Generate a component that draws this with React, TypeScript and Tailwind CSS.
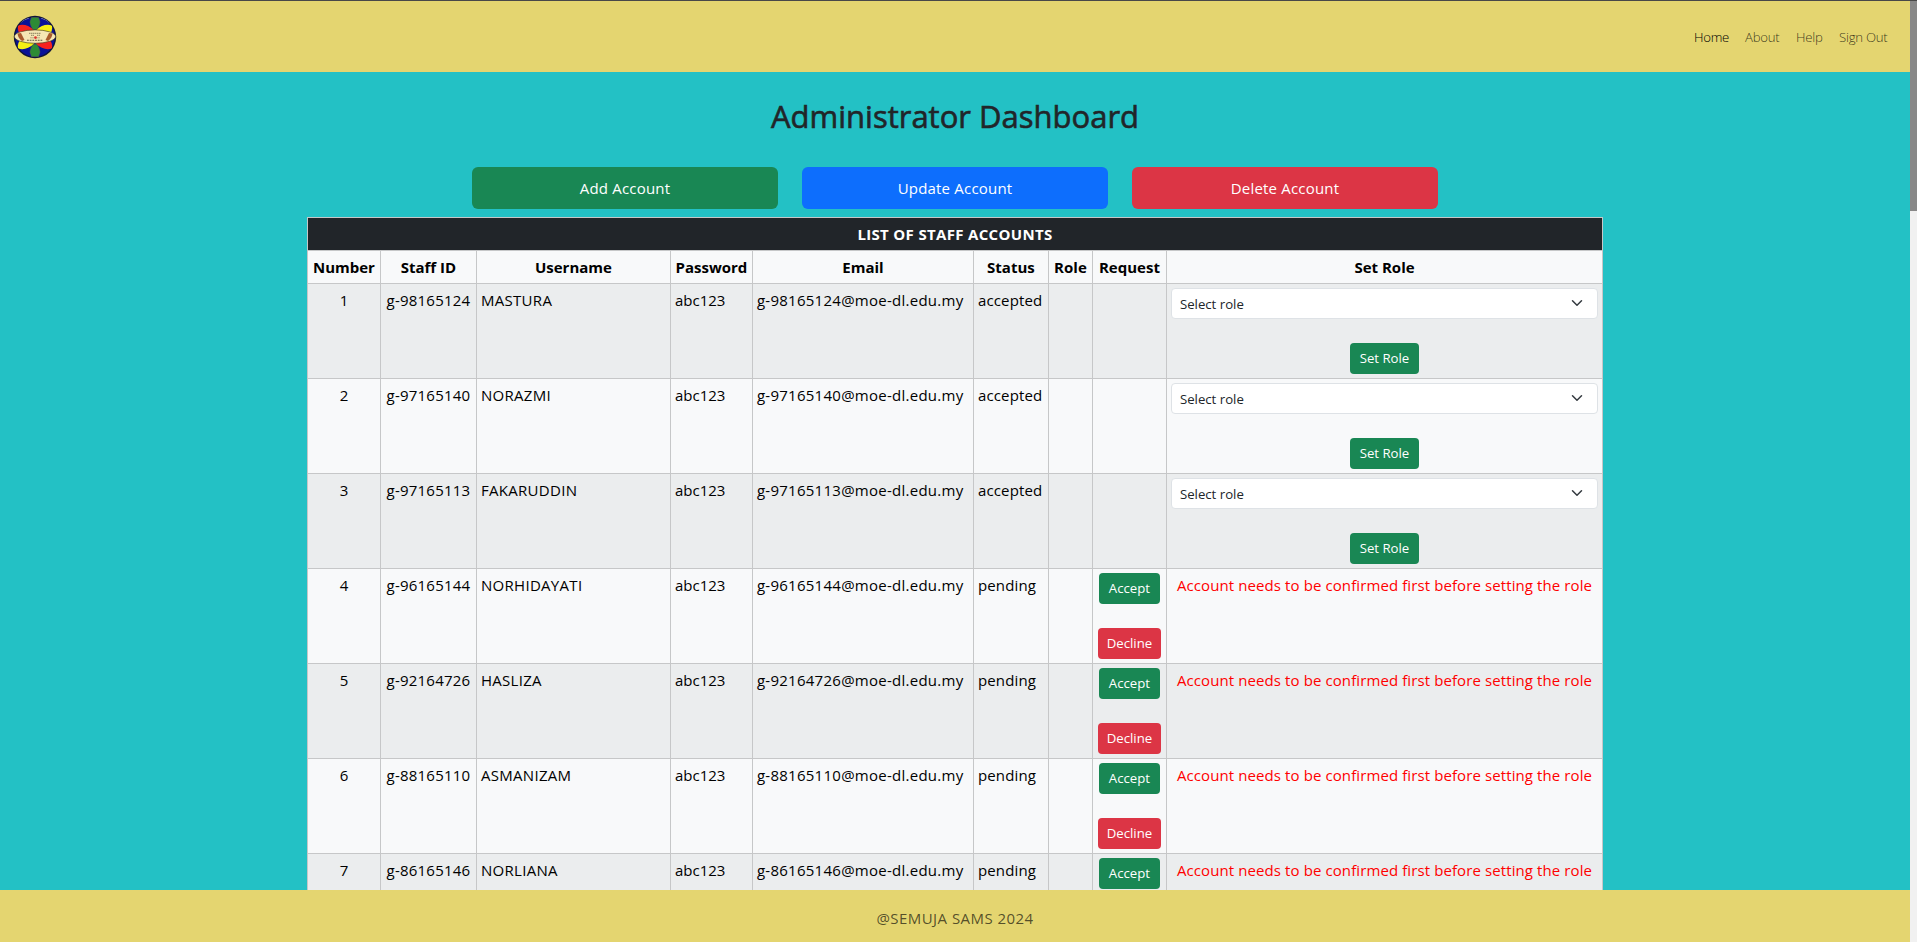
import React from "react";

type Account = { staffId: string; name: string; status: "accepted" | "pending" };

const accounts: Account[] = [
  { staffId: "g-98165124", name: "MASTURA", status: "accepted" },
  { staffId: "g-97165140", name: "NORAZMI", status: "accepted" },
  { staffId: "g-97165113", name: "FAKARUDDIN", status: "accepted" },
  { staffId: "g-96165144", name: "NORHIDAYATI", status: "pending" },
  { staffId: "g-92164726", name: "HASLIZA", status: "pending" },
  { staffId: "g-88165110", name: "ASMANIZAM", status: "pending" },
  { staffId: "g-86165146", name: "NORLIANA", status: "pending" },
];

function Crest() {
  return (
    <svg viewBox="0 0 44 44" className="size-11">
      <defs>
        <clipPath id="disc">
          <circle cx="22" cy="22" r="20.2" />
        </clipPath>
      </defs>
      <circle cx="22" cy="22" r="21.2" fill="#10143a" />
      <g clipPath="url(#disc)">
        <circle cx="22" cy="22" r="19.8" fill="#0a1298" />
        <path d="M7 8 A20 20 0 0 1 16 3" fill="none" stroke="#6f7ac4" strokeWidth="1" />
        <path d="M28 3 A20 20 0 0 1 37 8" fill="none" stroke="#6f7ac4" strokeWidth="1" />
        <path d="M5 10.5 Q13 8 21 15 V20 H8 Q4 16 5 10.5Z" fill="#f7221f" />
        <path d="M39 10.5 Q31 8 23 15 V20 H36 Q40 16 39 10.5Z" fill="#f5ef14" />
        <path d="M5 33.5 Q13 36 21 29 V24 H8 Q4 28 5 33.5Z" fill="#f5ef14" />
        <path d="M39 33.5 Q31 36 23 29 V24 H36 Q40 28 39 33.5Z" fill="#f7221f" />
        <path d="M18.5 2.5 H25.5 L27 7 Q26.5 11 24 14.5 H20 Q17.5 11 17 7Z" fill="#2d8b35" stroke="#5a6a3c" strokeWidth=".5" />
        <path d="M18.5 41.5 H25.5 L27 37 Q26.5 33 24 29.5 H20 Q17.5 33 17 37Z" fill="#2d8b35" stroke="#5a6a3c" strokeWidth=".5" />
      </g>
      <ellipse cx="22" cy="21.6" rx="20.6" ry="6.7" fill="#f5e6b4" stroke="#4f4526" strokeWidth=".7" />
      <path d="M4.5 18.5 L8 18 L11.5 25 L9 26 Q5 23 4.500 18.500Z" fill="#a85a2c" />
      <path d="M39.500 18.500 L36 18 L32.500 25 L35 26 Q39 23 39.500 18.500Z" fill="#a85a2c" />
      <path d="M16 18.300 H28 M18 20.300 H21 M24 20.300 H27" stroke="#6e6548" strokeWidth=".8" strokeDasharray="1.500 .5" />
      <path d="M14 25.300 H30" stroke="#5c543c" strokeWidth="1.100" strokeDasharray="1.800 .9" />
      <path d="M17 22.800 H27" stroke="#a79c78" strokeWidth=".8" />
      <circle cx="22.500" cy="22.600" r="1.300" fill="#e0342c" />
    </svg>
  );
}

const navItems = [
  { label: "Home", cls: "w-[35px] text-black" },
  { label: "About", cls: "w-[35px] text-black/75" },
  { label: "Help", cls: "w-[27px] text-black/75" },
  { label: "Sign Out", cls: "w-[51px] text-black/75" },
];

const columns = [
  { label: "Number", col: "w-[73px]" },
  { label: "Staff ID", col: "w-[96px]" },
  { label: "Username", col: "w-[194px]" },
  { label: "Password", col: "w-[82px]" },
  { label: "Email", col: "w-[221px]" },
  { label: "Status", col: "w-[75px]" },
  { label: "Role", col: "w-[44px]" },
  { label: "Request", col: "w-[74px]" },
  { label: "Set Role", col: "w-[436px]" },
];

const smallButton = "block h-[31px] rounded text-[13.2px] leading-[31px] text-white";

function Row({ account, index }: { account: Account; index: number }) {
  const accepted = account.status === "accepted";
  const shade = index % 2 === 0 ? "bg-[#ebedee]" : "bg-[#f8f9fa]";
  const cell = "border border-[#c6c7c8] px-1 pt-1 align-top whitespace-nowrap overflow-hidden";
  return (
    <tr className={"h-[95px] " + shade}>
      <td className={cell + " text-center"}>{index + 1}</td>
      <td className={cell + " text-center tracking-[0.22px]"}>{account.staffId}</td>
      <td className={cell + " tracking-[0.3px]"}>{account.name}</td>
      <td className={cell}>abc123</td>
      <td className={cell + " tracking-[0.26px]"}>{account.staffId}@moe-dl.edu.my</td>
      <td className={cell + " tracking-[0.15px]"}>{account.status}</td>
      <td className={cell} />
      <td className={cell}>
        {!accepted && (
          <div className="flex flex-col items-center gap-6">
            <button className={smallButton + " w-[61px] bg-[#198754]"}>Accept</button>
            <button className={smallButton + " w-[63px] bg-[#dc3545]"}>Decline</button>
          </div>
        )}
      </td>
      <td className={cell}>
        {accepted ? (
          <div className="flex flex-col items-center gap-6">
            <div className="flex h-[31px] w-full items-center justify-between rounded border border-[#dee2e6] bg-white pr-3.5 pl-2 text-[13.2px] text-[#212529]">
              <span>Select role</span>
              <svg viewBox="0 0 16 16" className="-mt-0.5 h-3 w-3" fill="none" stroke="#343a40" strokeWidth="2" strokeLinecap="round" strokeLinejoin="round">
                <path d="m2 5 6 6 6-6" />
              </svg>
            </div>
            <button className={smallButton + " w-[69px] bg-[#198754]"}>Set Role</button>
          </div>
        ) : (
          <p className="text-center tracking-[0.1px] text-[#ff0000]">Account needs to be confirmed first before setting the role</p>
        )}
      </td>
    </tr>
  );
}

export default function App() {
  return (
    <div className="flex h-[942px] w-[1917px] overflow-hidden border-t border-[#484848] bg-[#23c1c5] font-['Open_Sans','Noto_Sans',sans-serif] text-[15px] leading-6 text-black">
      <div className="flex h-full w-[1910px] flex-col">
        <header className="flex h-[71px] shrink-0 items-center justify-between bg-[#e4d570] pr-5 pl-[13px]">
          <Crest />
          <nav className="flex gap-4 text-[13.2px] font-light tracking-[-0.25px] whitespace-nowrap">
            {navItems.map((n) => (
              <a key={n.label} className={n.cls}>{n.label}</a>
            ))}
          </nav>
        </header>
        <main className="min-h-0 flex-1 overflow-hidden">
          <h1 className="pt-[25px] text-center text-[31px] leading-[38px] text-[#212529] [-webkit-text-stroke:0.6px_#212529]">Administrator Dashboard</h1>
          <div className="mt-8 flex justify-center gap-6 tracking-[0.2px] text-white">
            <button className="h-[42px] w-[306px] rounded-md bg-[#198754]">Add Account</button>
            <button className="h-[42px] w-[306px] rounded-md bg-[#0d6efd]">Update Account</button>
            <button className="h-[42px] w-[306px] rounded-md bg-[#dc3545]">Delete Account</button>
          </div>
          <table className="mx-auto mt-2 w-[1296px] table-fixed border-collapse">
            <colgroup>
              {columns.map((c) => (
                <col key={c.label} className={c.col} />
              ))}
            </colgroup>
            <thead>
              <tr className="h-[33px] bg-[#212529] text-white">
                <th colSpan={9} className="border border-[#c6c7c8] p-0 font-bold tracking-[0.33px]">LIST OF STAFF ACCOUNTS</th>
              </tr>
              <tr className="h-[33px] bg-[#f8f9fa]">
                {columns.map((c) => (
                  <th key={c.label} className="border border-[#c6c7c8] p-0 font-bold">{c.label}</th>
                ))}
              </tr>
            </thead>
            <tbody>
              {accounts.map((a, i) => (
                <Row key={a.staffId} account={a} index={i} />
              ))}
            </tbody>
          </table>
        </main>
        <footer className="flex h-[52px] shrink-0 items-center justify-center bg-[#e4d570] pt-1 tracking-[0.45px] text-black/65">@SEMUJA SAMS 2024</footer>
      </div>
      <div className="h-full w-[7px] bg-[#f1f1f1]">
        <div className="h-[210px] bg-[#888888]" />
      </div>
    </div>
  );
}
